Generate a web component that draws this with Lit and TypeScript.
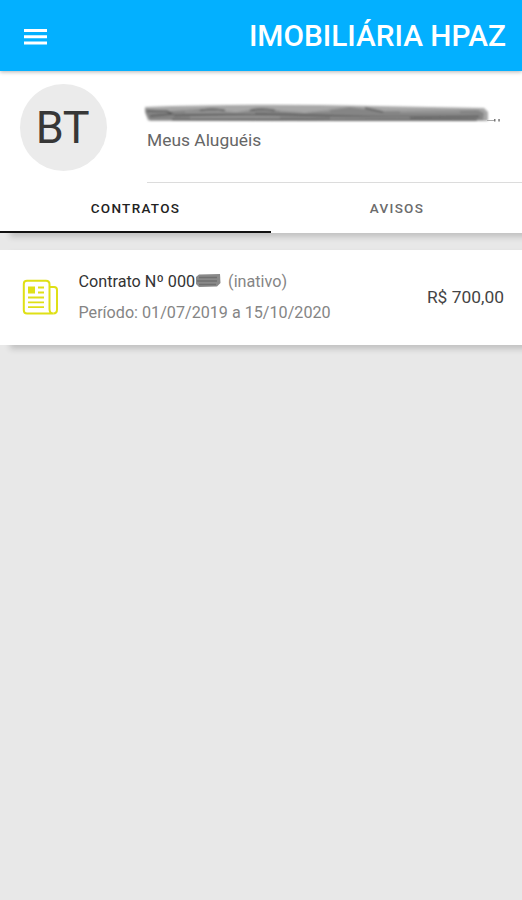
import { LitElement, html, css, svg } from "lit";
import { customElement } from "lit/decorators.js";

@customElement("app-root")
export class AppRoot extends LitElement {
  static styles = css`
    :host { display: flex; flex-direction: column; height: 900px; background: #e8e8e8; font-family: Roboto, sans-serif; overflow: hidden; }
    svg { display: block; flex: none; }
    .bar { position: relative; z-index: 1; flex: none; height: 71px; box-sizing: border-box; background: #03b0ff; display: flex; align-items: center; justify-content: space-between; padding: 0 16px 0 22.5px; color: #fff; box-shadow: 0 1px 4px rgba(0,0,0,.3); }
    .menu { width: 25px; height: 18px; margin-top: 2px; }
    .title { font-size: 29.8px; line-height: 36px; font-weight: 500; white-space: nowrap; }
    .profile { flex: none; background: #fff; height: 162px; display: flex; flex-direction: column; box-shadow: 10px 4px 6px rgba(0,0,0,.17); }
    .person { height: 112px; display: flex; }
    .avatar { box-sizing: border-box; margin: 13px 0 0 20px; padding: 0 2px 0 0; width: 87px; height: 87px; border-radius: 50%; background: #ebebeb; display: flex; align-items: center; justify-content: center; font-size: 45px; line-height: 54px; letter-spacing: -.4px; color: #373737; }
    .info { margin-left: 40px; flex: 1; box-sizing: border-box; border-bottom: 1px solid #dcdcdc; padding-top: 32px; }
    .name { display: flex; height: 22px; margin-left: -4px; }
    .sub { margin-top: 4px; font-size: 17.4px; line-height: 22px; color: #666; }
    .tabs { height: 50px; display: flex; font-weight: 500; font-size: 13.5px; letter-spacing: 1.3px; line-height: 50px; text-align: center; color: #6b6b6b; }
    .tab { flex: 1; box-sizing: border-box; border-bottom: 2px solid transparent; padding-left: 1px; }
    .tab.on { flex: none; width: 271px; color: #222; border-color: #111; padding: 0; }
    .card { margin-top: 17px; flex: none; height: 95px; box-sizing: border-box; background: #fff; box-shadow: 10px 4px 6px rgba(0,0,0,.17); display: flex; align-items: center; padding: 0 18px 0 22px; }
    .body { margin-left: 19.5px; flex: 1; padding-bottom: 2px; }
    .line { display: flex; align-items: center; font-size: 16.2px; line-height: 31px; white-space: nowrap; color: #333; }
    .period { font-size: 16.15px; }
    .muted { color: #858585; }
    .redact { margin: 0 7px 0 0; }
    .price { font-size: 17.4px; color: #444; padding-bottom: 2px; }
  `;

  render() {
    return html`
      <header class="bar">
        <svg class="menu" viewBox="0 0 25 18" fill="#fff"><path d="M1 1h23v3H1zM1 7.2h23v3H1zM1 13.400h23v3H1z"/></svg>
        <div class="title">IMOBILIÁRIA HPAZ</div>
      </header>
      <section class="profile">
        <div class="person">
          <div class="avatar">BT</div>
          <div class="info">
            <div class="name">${this.nameMask()}</div>
            <div class="sub">Meus Aluguéis</div>
          </div>
        </div>
        <nav class="tabs">
          <div class="tab on">CONTRATOS</div>
          <div class="tab">AVISOS</div>
        </nav>
      </section>
      <section class="card">
        ${this.paper()}
        <div class="body">
          <div class="line"><span>Contrato Nº 000</span>${this.numberMask()}<span class="muted">(inativo)</span></div>
          <div class="line period muted">Período: 01/07/2019 a 15/10/2020</div>
        </div>
        <div class="price">R$ 700,00</div>
      </section>`;
  }

  private nameMask() {
    return html`<svg width="362" height="22" viewBox="143 103 362 22" fill="none">
      <defs><filter id="soft" x="-5%" y="-50%" width="110%" height="200%"><feGaussianBlur stdDeviation="1"/></filter></defs>
      ${svg`<g filter="url(#soft)">
        <path d="M145 107Q220 104 320 105L484 108L488 112V120.500L486 121L148 120.500L145 112Z" fill="#a8a8a8"/>
        <path d="M145 109L170 111L204 109L236 112L262 109L305 113L350 107L380 111L478 110L484 113L483 120L150 120.500L146 114Z" fill="#858585"/>
        <path d="M147 111h20l5 3-22 2M174 115.500q70-3 145 0t160 1M172 119.500l305 .5M200 110.500q12-3 25 0M250 110.500q12-3 25 0M365 108l18 4" stroke="#585858" stroke-width="1.600"/>
        <path d="M185 112l70 1M280 111h50M400 112h60M330 118l80 0M190 117.500h90" stroke="#a3a3a3"/>
      </g>`}
      <path d="M487 120.500h8" stroke="#aaa"/>
      <path d="M494 119h1.500v2.500h-1.500zM498.300 119h1.500v2.500h-1.500z" fill="#777"/>
    </svg>`;
  }

  private numberMask() {
    return html`<svg class="redact" width="26" height="16" viewBox="195 273 26 16" fill="none">
      <defs><filter id="soft2" x="-10%" y="-20%" width="120%" height="140%"><feGaussianBlur stdDeviation=".7"/></filter></defs>
      <g filter="url(#soft2)"><path d="M199 274.500L220 274L220.500 283L217 286.500L199 287L196 284V277Z" fill="#8a8a8a"/>
      <path d="M199 277.500h18M197 281h20M199 284.500h17" stroke="#707070" stroke-width="1.500"/></g>
    </svg>`;
  }

  private paper() {
    return html`<svg width="37" height="37" viewBox="22 279 37 37" fill="none" stroke="#dfe016" stroke-width="2">
      <path d="M27 280.800H46q3.500 0 3.500 3.500V309q0 4.500 3.800 4.500H27q-3.200 0-3.200-3.200V284q0-3.200 3.200-3.200Z"/>
      <path d="M49.500 287H54q3 0 3 3V309.500q0 4-3.700 4"/>
      <path d="M38 287.500h6M38 292.500h6M28 297.500h16M28 302.300h16M28 307.200h16" stroke-width="1.800"/>
      <rect x="28" y="286.500" width="7" height="7" fill="#dfe016" stroke="none"/>
    </svg>`;
  }
}
